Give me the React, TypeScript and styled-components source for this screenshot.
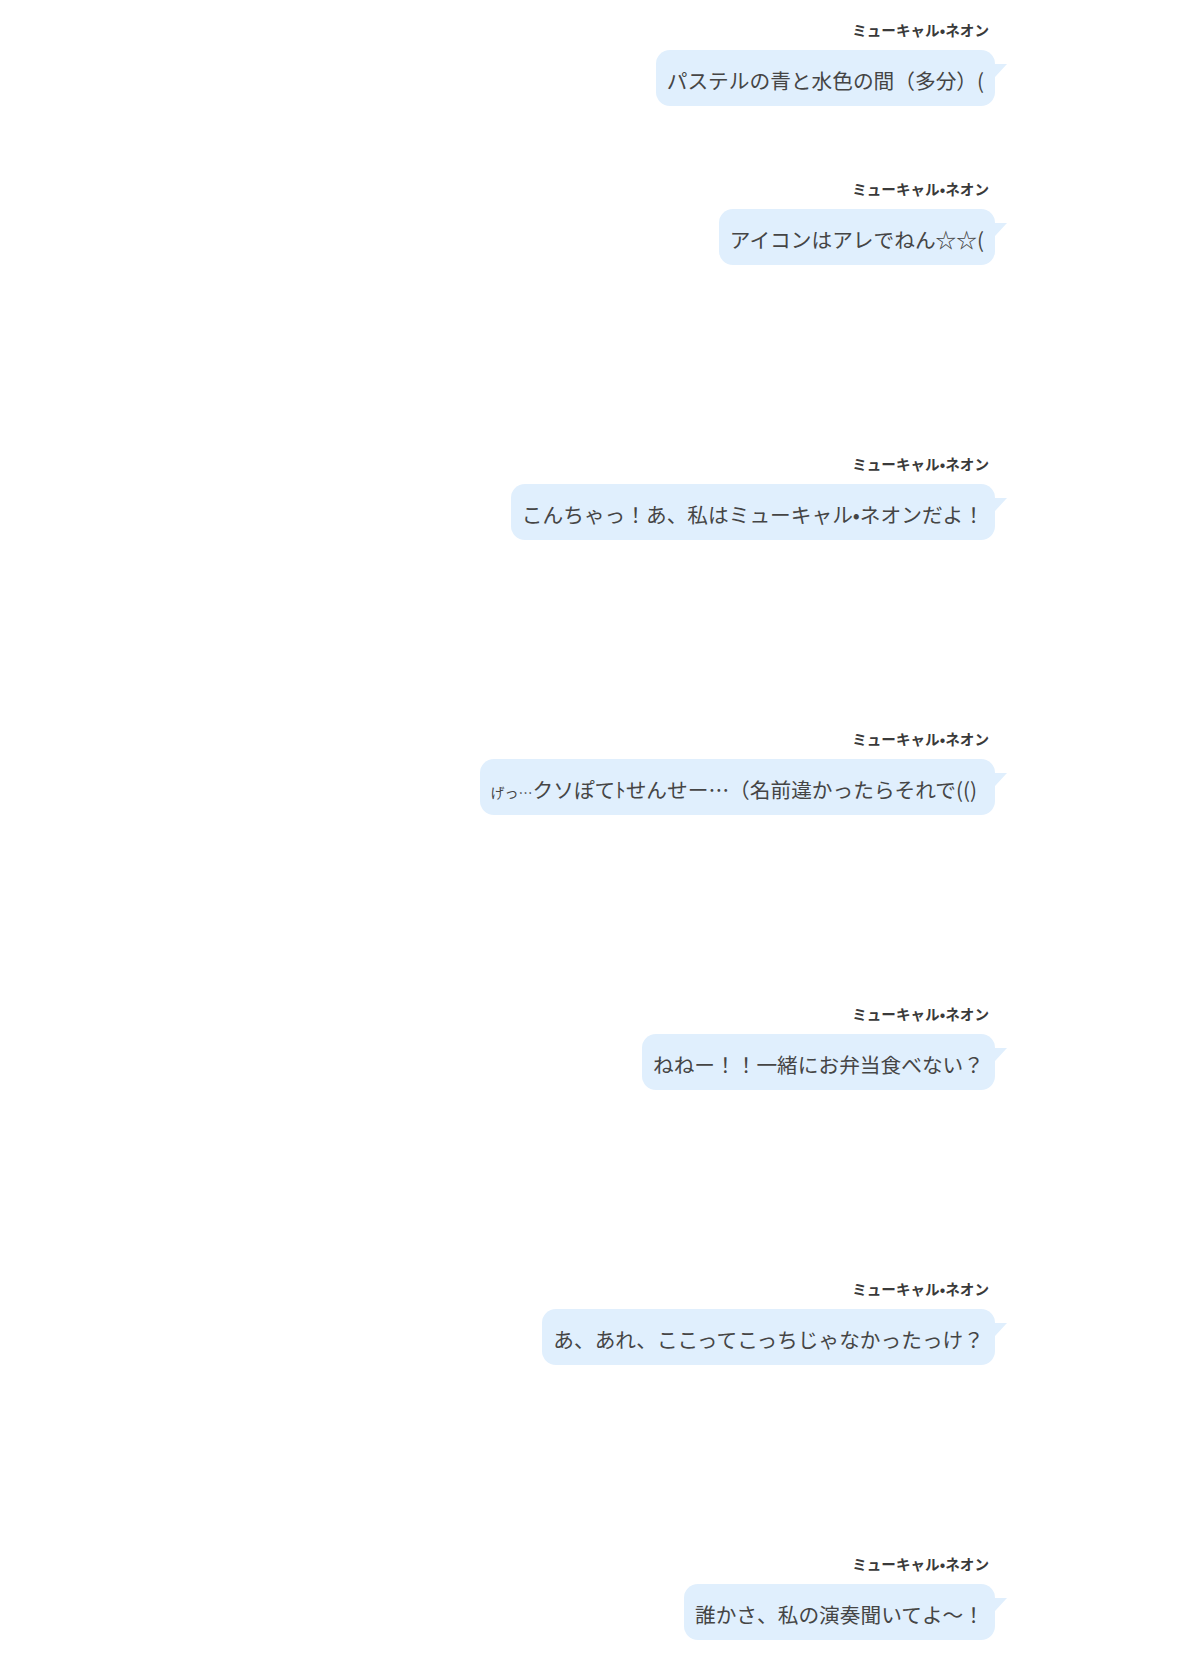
import styled, { createGlobalStyle } from 'styled-components';

const GlobalStyle = createGlobalStyle`
  html, body {
    margin: 0;
    padding: 0;
    background: #ffffff;
  }
  body {
    font-family: "Noto Sans CJK JP", "Noto Sans", sans-serif;
  }
`;

const ScLog = styled.div`
  width: 1200px;
  padding: 20px 205px 0 0;
  box-sizing: border-box;

  display: flex;
  flex-direction: column;
  align-items: flex-end;
`;

const ScMessage = styled.div<{ $space: number }>`
  display: flex;
  flex-direction: column;
  align-items: flex-end;
  gap: 10px;
  margin-bottom: ${(p) => p.$space}px;
`;

const ScName = styled.div`
  padding-right: 6px;
  font-size: 14.6px;
  line-height: 20px;
  font-weight: 700;
  color: #3a3a3a;
`;

const ScBubble = styled.div`
  position: relative;
  padding: 13px 11px 8px 11px;

  font-size: 20.7px;
  line-height: 35px;
  color: #454545;
  white-space: pre;

  background-color: #e0effd;
  border-radius: 14px;

  /* tail */
  &::after {
    content: '';
    position: absolute;
    right: -12px;
    top: 14px;
    border-top: 13px solid #e0effd;
    border-right: 12px solid transparent;
  }
`;

const ScSmall = styled.span`
  font-size: 14px;
  line-height: 1;
`;

// trailing gap after the last message text
const ScTrail = styled.span`
  display: inline-block;
  width: 7px;
`;

const NAME = 'ミューキャル•ネオン';

const messages: { text: React.ReactNode; space: number }[] = [
  { text: 'パステルの青と水色の間（多分）(', space: 73 },
  { text: 'アイコンはアレでねん☆☆(', space: 189 },
  { text: 'こんちゃっ！あ、私はミューキャル•ネオンだよ！', space: 189 },
  {
    text: (
      <>
        <ScSmall>げっ…</ScSmall>クソぽてﾄせんせー…（名前違かったらそれで(()
        <ScTrail />
      </>
    ),
    space: 189,
  },
  { text: 'ねねー！！一緒にお弁当食べない？', space: 189 },
  { text: 'あ、あれ、ここってこっちじゃなかったっけ？', space: 189 },
  { text: '誰かさ、私の演奏聞いてよ〜！', space: 20 },
];

export const App = () => {
  return (
    <>
      <GlobalStyle />
      <ScLog>
        {messages.map((m, i) => (
          <ScMessage key={i} $space={m.space}>
            <ScName>{NAME}</ScName>
            <ScBubble>{m.text}</ScBubble>
          </ScMessage>
        ))}
      </ScLog>
    </>
  );
};

export default App;
